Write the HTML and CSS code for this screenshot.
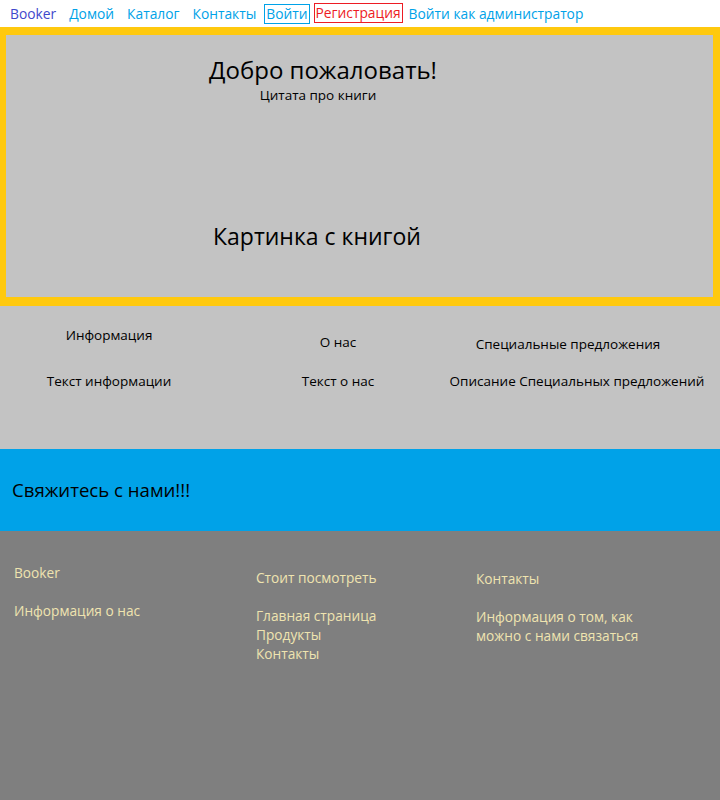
FILE: index.html
```html
<!DOCTYPE html>
<html lang="ru">
<head>
<meta charset="utf-8">
<title>Booker</title>
<link rel="stylesheet" href="styles.css">
</head>
<body>
<nav class="nav">
  <a class="nav-item brand" href="#">Booker</a>
  <a class="nav-item" href="#">Домой</a>
  <a class="nav-item" href="#">Каталог</a>
  <a class="nav-item" href="#">Контакты</a>
  <a class="nav-item login" href="#">Войти</a>
  <a class="nav-item register" href="#">Регистрация</a>
  <a class="nav-item" href="#">Войти как администратор</a>
</nav>
<section class="hero">
  <div class="hero-inner">
    <div class="hero-text">
      <h1 class="hero-title">Добро пожаловать!</h1>
      <p class="hero-quote">Цитата про книги</p>
      <p class="hero-picture">Картинка с книгой</p>
    </div>
  </div>
</section>
<section class="info">
  <div class="info-col col-a">
    <h3 class="info-head">Информация</h3>
    <p class="info-text">Текст информации</p>
  </div>
  <div class="info-col col-b">
    <h3 class="info-head">О нас</h3>
    <p class="info-text">Текст о нас</p>
  </div>
  <div class="info-col col-c">
    <h3 class="info-head">Специальные предложения</h3>
    <p class="info-text">Описание Специальных предложений</p>
  </div>
</section>
<section class="contact">
  <p class="contact-text">Свяжитесь с нами!!!</p>
</section>
<footer class="footer">
  <div class="foot-col f1">
    <p class="foot-head">Booker</p>
    <p class="foot-line">Информация о нас</p>
  </div>
  <div class="foot-col f2">
    <p class="foot-head">Стоит посмотреть</p>
    <p class="foot-line">Главная страница</p>
    <p class="foot-line">Продукты</p>
    <p class="foot-line">Контакты</p>
  </div>
  <div class="foot-col f3">
    <p class="foot-head">Контакты</p>
    <p class="foot-line">Информация о том, как<br>можно с нами связаться</p>
  </div>
</footer>
</body>
</html>
```

FILE: styles.css
```css
* { box-sizing: border-box; }
html, body { margin: 0; padding: 0; }
body {
  width: 720px;
  height: 800px;
  font-family: "Open Sans", "Noto Sans", sans-serif;
  font-size: 13.5px;
  color: #000;
  background: #7f7f7f;
  overflow: hidden;
}
p, h1, h3 { margin: 0; font-weight: normal; }

.nav {
  height: 27px;
  background: #fff;
  display: flex;
  align-items: center;
  padding: 0 0 0 10px;
  gap: 13px;
  font-size: 13.8px;
}
.nav-item {
  color: #00a2e8;
  text-decoration: none;
  line-height: 18px;
}
.brand { color: #3f48cc; }
.login {
  border: 1px solid #00a2e8;
  padding: 0 1px;
  margin-left: -5px;
}
.register {
  color: #ed1c24;
  border: 1px solid #ed1c24;
  padding: 0 1px;
  margin-left: -9px;
  margin-top: -2px;
}
.register + .nav-item { margin-left: -7px; }

.hero {
  background: #ffc90e;
  height: 279px;
  border-style: solid;
  border-color: #ffc90e;
  border-width: 8px 7px 9px 6px;
}
.hero-inner {
  background: #c3c3c3;
  height: 100%;
}
.hero-text {
  width: 300px;
  margin-left: 167px;
  text-align: center;
  padding-top: 18px;
}
.hero-title {
  font-size: 24px;
  line-height: 34px;
}
.hero-quote {
  font-size: 13.5px;
  line-height: 18px;
  margin-left: -10px;
  margin-top: -1px;
}
.hero-picture {
  font-size: 23px;
  line-height: 32px;
  margin-top: 116px;
  margin-left: -12px;
}

.info {
  background: #c3c3c3;
  height: 143px;
  display: flex;
}
.info-col { text-align: center; }
.info-head { font-size: 13.5px; line-height: 18px; }
.info-text { font-size: 13.5px; line-height: 18px; }
.col-a { width: 218px; padding-top: 20px; }
.col-a .info-text { margin-top: 28px; }
.col-b { width: 240px; padding-top: 27px; }
.col-b .info-text { margin-top: 21px; }
.col-c { width: 262px; padding-top: 29px; margin-left: -12px; }
.col-c .info-head { margin-left: -18px; }
.col-c .info-text { margin-top: 19px; }

.contact {
  background: #00a2e8;
  height: 82px;
  display: flex;
  align-items: center;
  padding-left: 12px;
}
.contact-text { font-size: 18.6px; line-height: 24px; }

.footer {
  display: flex;
  color: #efe4b0;
  padding-top: 32px;
}
.foot-col p { font-size: 13.7px; line-height: 19px; }
.f1 { width: 242px; padding-left: 14px; }
.f1 .foot-line { margin-top: 19px; }
.f2 { width: 220px; padding-left: 14px; padding-top: 5px; }
.f2 .foot-head + .foot-line { margin-top: 19px; }
.f3 { padding-left: 14px; padding-top: 6px; }
.f3 .foot-line { margin-top: 19px; }
```
